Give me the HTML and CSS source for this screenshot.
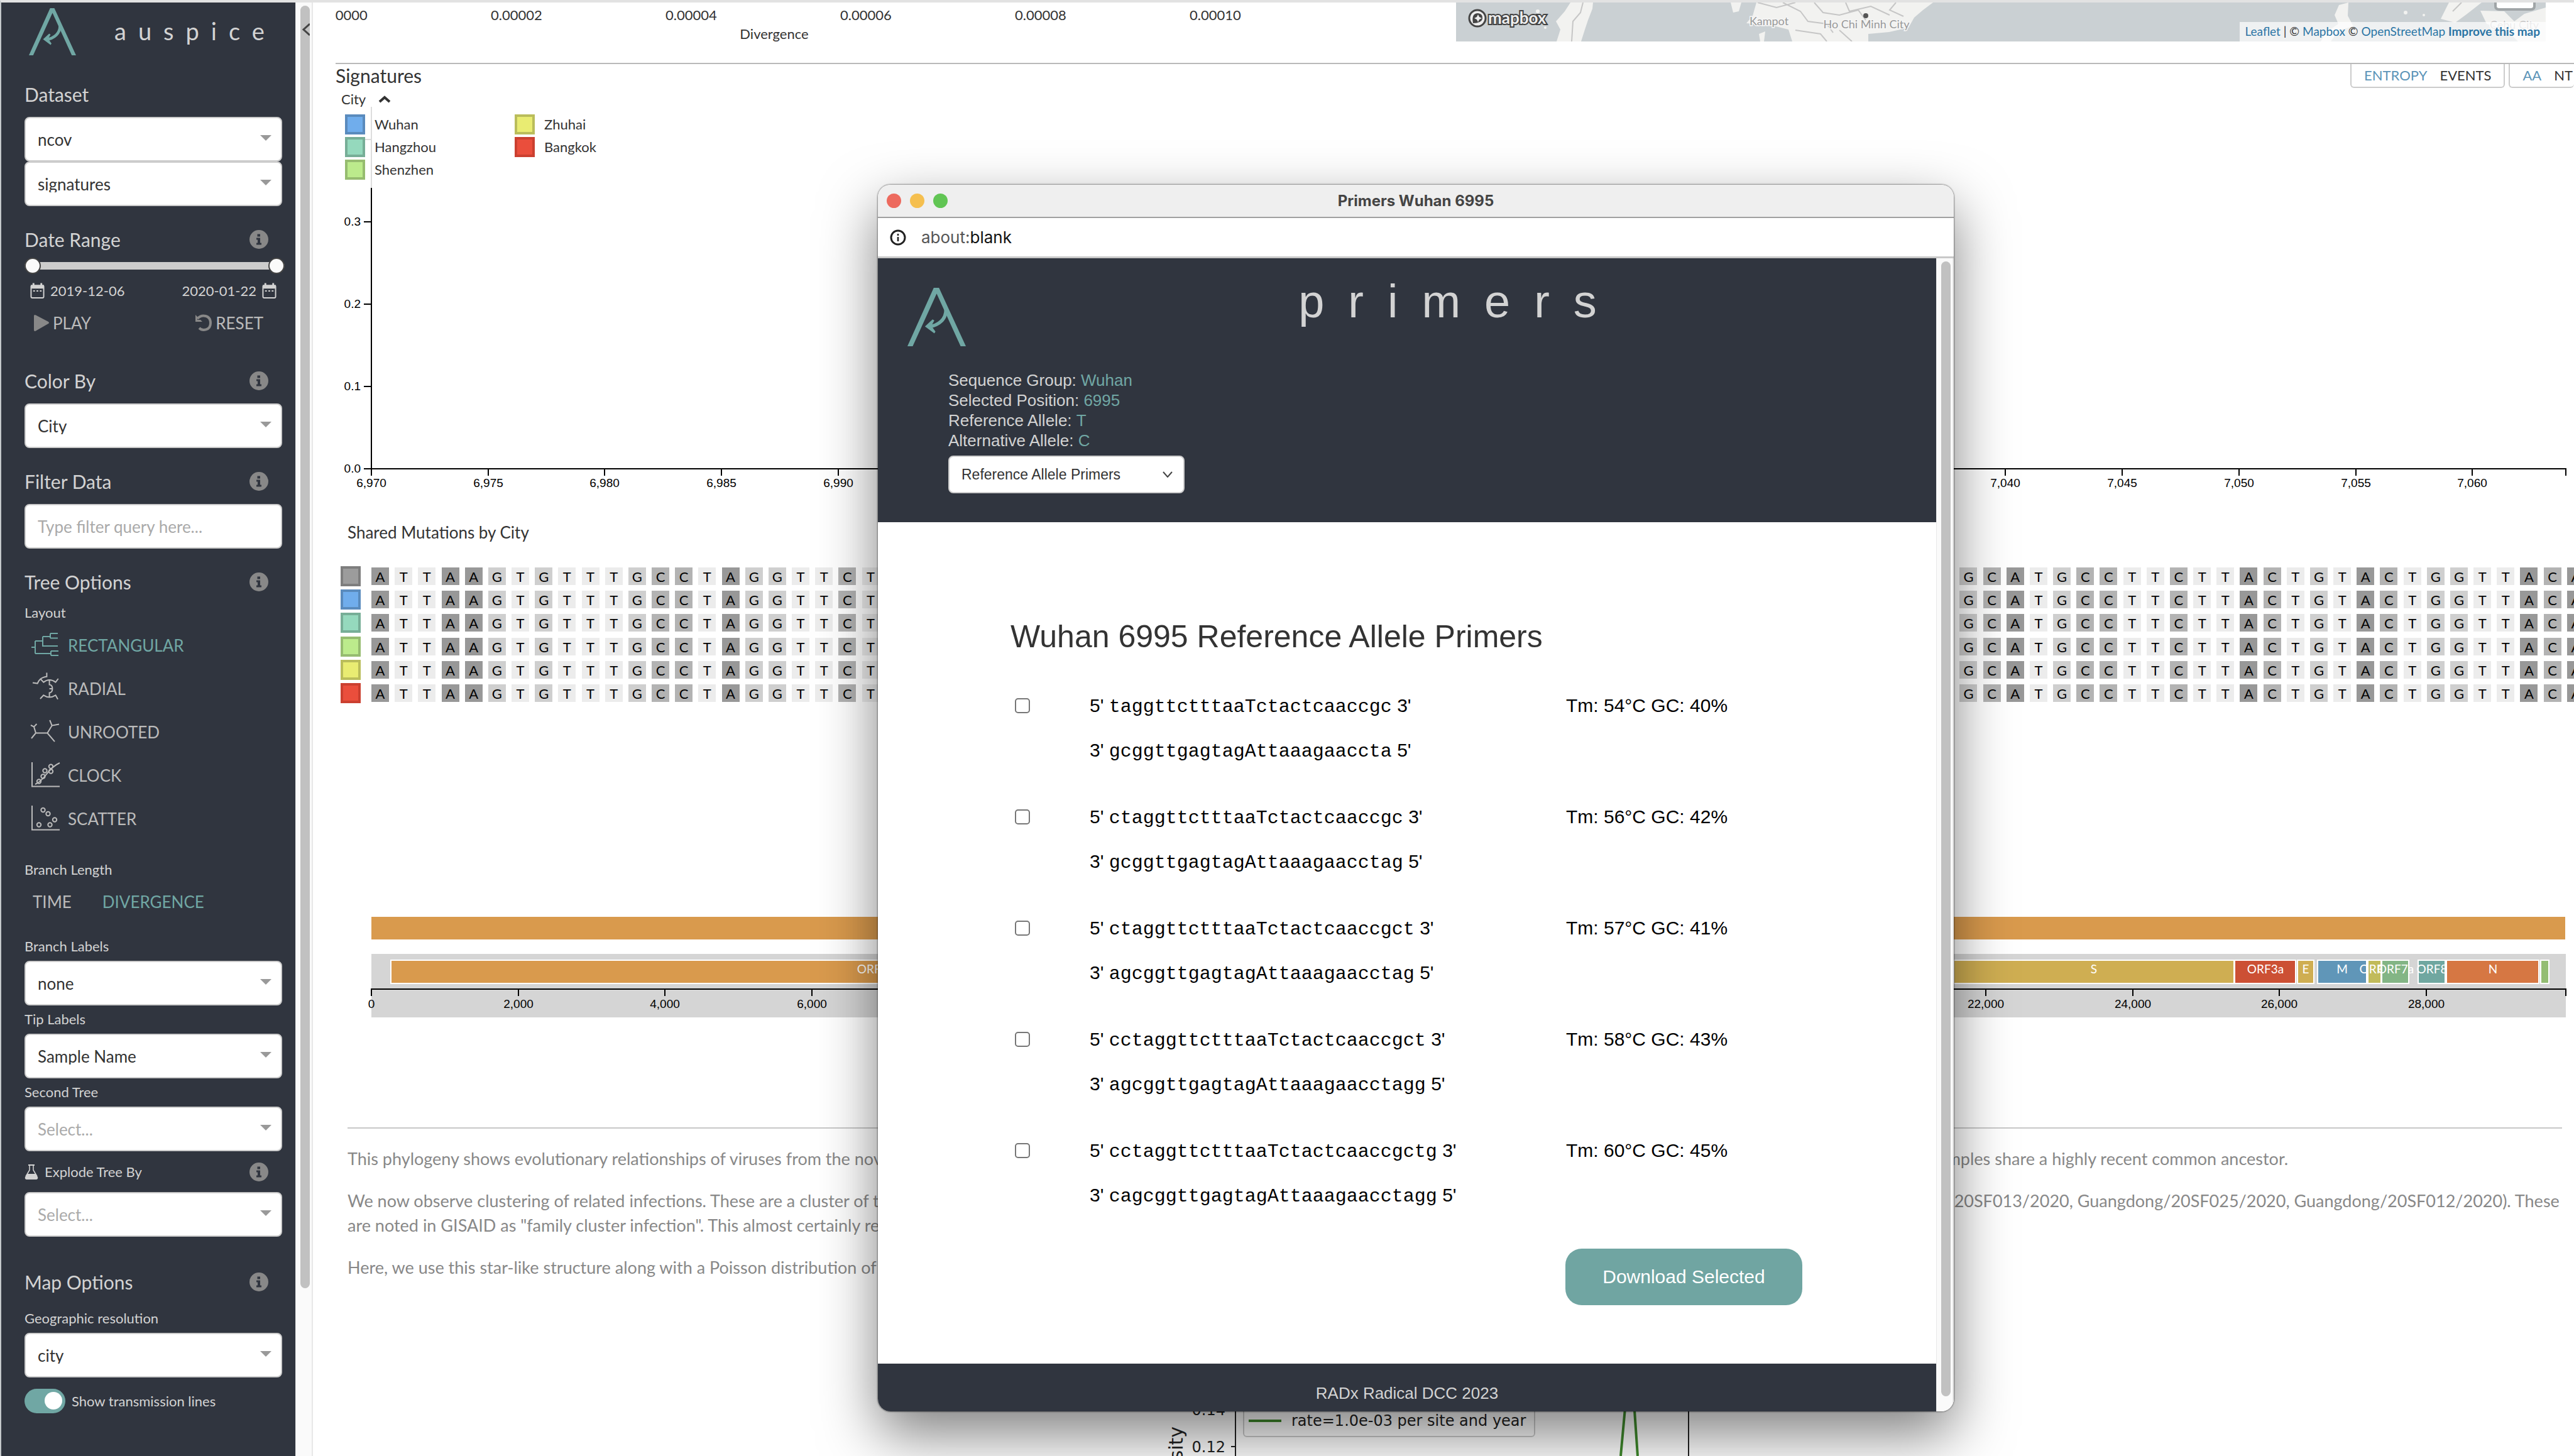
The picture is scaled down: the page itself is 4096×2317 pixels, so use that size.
FILE: index.html
```html
<!DOCTYPE html>
<html lang="en">
<head>
<meta charset="utf-8">
<title>auspice</title>
<link rel="stylesheet" href="styles.css">
</head>
<body>
<svg class="defs" aria-hidden="true">
  <symbol id="logo" viewBox="0 0 100 100">
    <path fill="currentColor" d="M45 0H54L100 100H91L50 10L9 100H0Z"/>
    <path fill="none" stroke="currentColor" stroke-width="6" d="M66 37C66 53 55 64 36 67"/>
    <path fill="currentColor" d="M30 66L43 54L46 56L41 65L48 75L46 78Z"/>
  </symbol>
  <symbol id="info" viewBox="0 0 30 30">
    <circle cx="15" cy="15" r="15" fill="#888"/>
    <path fill="#30353f" d="M12.5 6.5h4.500v4h-4.500zM11 12.500h6v8h2v3h-8v-3h2v-5h-2z"/>
  </symbol>
  <symbol id="calendar" viewBox="0 0 24 26">
    <rect x="1.500" y="4" width="21" height="20.500" rx="2" fill="none" stroke="#d3d3d3" stroke-width="2"/>
    <path fill="#d3d3d3" d="M1 3h22v6H1zM4 0h3v4H4zM17 0h3v4h-3zM5 12h3v2H5zM10.500 12h3v2h-3zM16 12h3v2h-3z"/>
  </symbol>
</svg>

<div class="app">
  <form class="sidebar">
    <header class="brand">
      <svg class="brand-logo"><use href="#logo"/></svg>
      <span class="brand-name">auspice</span>
    </header>

    <h2 class="heading">Dataset</h2>
    <div class="select"><select aria-label="Dataset"><option>ncov</option></select></div>
    <div class="select"><select aria-label="Dataset part"><option>signatures</option></select></div>

    <h2 class="heading heading-tight">Date Range <svg class="info"><use href="#info"/></svg></h2>
    <div class="slider">
      <input type="range" min="0" max="100" value="0" aria-label="Start date">
      <input type="range" min="0" max="100" value="100" aria-label="End date">
    </div>
    <div class="dates">
      <span><svg class="calendar"><use href="#calendar"/></svg>2019-12-06</span>
      <span>2020-01-22<svg class="calendar"><use href="#calendar"/></svg></span>
    </div>
    <div class="player">
      <button type="button"><svg viewBox="0 0 26 28" width="26" height="28"><path fill="#888" d="M1 3Q1 0 4 1.500L24 12Q26 14 24 15L4 26.500Q1 28 1 25Z"/></svg>PLAY</button>
      <button type="button"><svg viewBox="0 0 28 28" width="28" height="28"><path fill="none" stroke="#888" stroke-width="4" d="M4 7C12 -1 25 2 25 14C25 26 12 27 7 22"/><path fill="#888" d="M1 1L1 12H12L9 9L4 9L4 4Z"/></svg>RESET</button>
    </div>

    <h2 class="heading heading-far">Color By <svg class="info"><use href="#info"/></svg></h2>
    <div class="select"><select aria-label="Color By"><option>City</option></select></div>

    <h2 class="heading">Filter Data <svg class="info"><use href="#info"/></svg></h2>
    <input class="field" type="text" placeholder="Type filter query here..." aria-label="Filter Data">

    <h2 class="heading">Tree Options <svg class="info"><use href="#info"/></svg></h2>
    <h3 class="label">Layout</h3>
    <div class="layouts">
      <button type="button" class="layout active"><svg viewBox="0 0 50 48"><path d="M4 27H10M10 17V37M10 17H22M22 10V25H46M22 10H34M34 5V12.500M34 5H46M34 12.500H46M10 37H35M35 33V40M35 33H47M35 40H47"/></svg>RECTANGULAR</button>
      <button type="button" class="layout"><svg viewBox="0 0 50 48"><path d="M6 14.600L13.600 15.600C16 10 19 6 28.400 4.700V-1.500M18 8L23.300 13.600Q32.600 6.500 42.500 13.600L46.700 8M32.600 10V17.500Q37.400 18 37.400 24T32.600 30.400V38M32.600 24H38M18 40L23.300 34.300Q32.600 40.500 42.500 34.300L46 40.700"/></svg>RADIAL</button>
      <button type="button" class="layout"><svg viewBox="0 0 50 48"><path d="M3 13L8 15.600L12.400 11M8 15.600L11 25.500L4 34M11 25.500H29.400L41 39.200M29.400 25.500L36.700 13.600L48 11.600M36.700 13.600L33.200 5"/></svg>UNROOTED</button>
      <button type="button" class="layout"><svg viewBox="0 0 50 48"><path d="M5 3V41.500H49M10 38Q18 35 28 22T49 4"/><circle cx="16" cy="33.500" r="3.200"/><circle cx="22.500" cy="25.500" r="3.200"/><circle cx="25.500" cy="16.500" r="3.200"/><circle cx="35" cy="9.700" r="3.200"/><circle cx="35" cy="17.500" r="3.200"/></svg>CLOCK</button>
      <button type="button" class="layout"><svg viewBox="0 0 50 48"><path d="M5 3V41.500H49"/><circle cx="22.500" cy="10" r="3.200"/><circle cx="30.500" cy="16" r="3.200"/><circle cx="41" cy="25.500" r="3.200"/><circle cx="16" cy="33.500" r="3.200"/><circle cx="33.500" cy="33.500" r="3.200"/></svg>SCATTER</button>
    </div>
    <h3 class="label label-branch">Branch Length</h3>
    <div class="lengths">
      <button type="button">TIME</button>
      <button type="button" class="active">DIVERGENCE</button>
    </div>
    <label class="label label-first" for="branch-labels">Branch Labels</label>
    <div class="select select-close"><select id="branch-labels"><option>none</option></select></div>
    <label class="label label-next" for="tip-labels">Tip Labels</label>
    <div class="select select-close"><select id="tip-labels"><option>Sample Name</option></select></div>
    <label class="label label-next" for="second-tree">Second Tree</label>
    <div class="select select-close empty"><select id="second-tree"><option>Select...</option></select></div>
    <label class="label label-explode" for="explode">
      <svg viewBox="0 0 22 24" width="22" height="24"><path fill="#d3d3d3" d="M6 0H16V2H6ZM1 20L4.500 15H17.500L21 20Q22 23 19 24H3Q0 23 1 20Z"/><path fill="none" stroke="#d3d3d3" stroke-width="1.500" d="M8 1V9L2 19M14 1V9L20 19"/></svg>
      Explode Tree By <svg class="info"><use href="#info"/></svg></label>
    <div class="select empty"><select id="explode"><option>Select...</option></select></div>

    <h2 class="heading heading-far">Map Options <svg class="info"><use href="#info"/></svg></h2>
    <label class="label label-geo" for="geo">Geographic resolution</label>
    <div class="select select-close"><select id="geo"><option>city</option></select></div>
    <label class="toggle"><input type="checkbox" checked>Show transmission lines</label>
  </form>

  <div class="scrollbar side-scroll"><div class="thumb"></div>
    <svg class="collapse" viewBox="0 0 12 20"><path d="M12 1L2 10L12 19" fill="none" stroke="#444" stroke-width="3"/></svg>
  </div>

  <main class="content">
    <div class="panels">
      <svg class="tree-axis" viewBox="0 0 1783 96">
        <g text-anchor="middle">
          <text x="10" y="28">0.00000</text><text x="288" y="28">0.00002</text><text x="566" y="28">0.00004</text>
          <text x="844" y="28">0.00006</text><text x="1122" y="28">0.00008</text><text x="1400" y="28">0.00010</text>
          <text x="698" y="58">Divergence</text>
        </g>
      </svg>
      <div class="map">
        <svg viewBox="0 0 1734 62">
          <g fill="#f2f2f0">
            <path d="M182 0H218L217 10L210 28L205 43L199 62H160L166 43L159 30L173 14Z"/>
            <path d="M437 0H454L450 14L441 16ZM492 46L490 62H484L482 50Z"/>
            <path d="M478 0H759L743 12L729 24L720 40L689 47L656 50L656 62H535L529 43L505 37L462 33L472 21Z"/>
            <path d="M1405 4L1420 0L1419 21L1428 38L1404 44L1392 62H1376L1384 48L1404 34L1398 20Z"/>
            <path d="M1580 0H1632L1609 18L1590 32L1567 26Z"/>
            <path d="M1630 13L1668 14L1684 30L1700 18L1734 8V62H1690L1672 44L1640 34Z"/>
            <circle cx="130" cy="14" r="3"/><circle cx="142" cy="40" r="2"/><circle cx="1511" cy="16" r="3"/><circle cx="1540" cy="20" r="2"/>
          </g>
          <g fill="none" stroke="#c6c6c6" stroke-width="2">
            <path d="M202 0L198 16L186 30L184 62M480 0L510 8L540 0M520 0L548 14L560 30L590 34L600 48M570 0L584 16L610 20L640 12L652 28M620 0L626 14L660 6L690 20M540 44L580 50L590 62M610 44L630 62M700 0L690 12L712 22M1600 0L1586 14"/>
          </g>
          <circle cx="652" cy="21" r="4" fill="#555"/>
          <g class="places" text-anchor="middle"><text x="498" y="36">Kampot</text><text x="653" y="41">Ho Chi Minh City</text><text class="faint" x="1684" y="42">Cebu City</text></g>
          <circle cx="34" cy="25" r="13" fill="#eee" stroke="#444" stroke-width="3"/>
          <path fill="#444" d="M27 33Q24 17 35 17Q43 18 42 26Q40 33 27 33Z"/>
          <path fill="#eee" d="M35 19L37 23L41 25L37 27L35 31L33 27L29 25L33 23Z"/>
          <text class="mapbox" x="51" y="34">mapbox</text>
          <path d="M1654 -4V6Q1654 11 1660 11H1710Q1716 11 1716 6V-4Z" fill="#fff" stroke="#a0a5a7" stroke-width="4"/>
        </svg>
        <p class="credit"><a href="#">Leaflet</a> | © <a href="#">Mapbox</a> © <a href="#">OpenStreetMap</a> <a href="#"><b>Improve this map</b></a></p>
      </div>
    </div>

    <section class="signatures">
      <div class="sig-head">
        <h2>Signatures</h2>
        <div class="switches">
          <div class="switch"><button type="button" class="on">ENTROPY</button><button type="button">EVENTS</button></div>
          <div class="switch cut"><button type="button" class="on">AA</button><button type="button">NT</button></div>
        </div>
      </div>
      <div class="chart">
        <svg id="chart" viewBox="0 0 3562 693">
          <g fill="#ddd"><rect x="46" y="83" width="11" height="2"/><rect x="56" y="32" width="2" height="129"/></g>
          <rect x="56" y="161" width="2" height="448"/><rect x="45" y="607" width="3505" height="2"/><rect x="3548" y="607" width="2" height="12"/>
        </svg>
        <div class="legend">
          <button type="button" class="legend-title">City <svg viewBox="0 0 20 12" width="20" height="12"><path d="M2 10L10 3L18 10" fill="none" stroke="#333" stroke-width="4"/></svg></button>
          <ul>
            <li><i class="swatch wuhan"></i>Wuhan</li><li><i class="swatch hangzhou"></i>Hangzhou</li><li><i class="swatch shenzhen"></i>Shenzhen</li>
            <li><i class="swatch zhuhai"></i>Zhuhai</li><li><i class="swatch bangkok"></i>Bangkok</li>
          </ul>
        </div>
      </div>
      <h3>Shared Mutations by City</h3>
      <div class="matrix" id="matrix"></div>
      <svg class="genome" id="genome" viewBox="0 0 3562 160">
        <rect x="57" y="0" width="3491" height="36" fill="#d99a4d"/>
        <rect x="57" y="59" width="3492" height="101" fill="#d5d5d5"/>
      </svg>
    </section>

    <article class="notes">
      <p>This phylogeny shows evolutionary relationships of viruses from the novel coronavirus (nCoV) outbreak in Wuhan, China and infections exported to other cities. Although the genetic diversity is low, it's clear that all samples share a highly recent common ancestor.</p>
      <p>We now observe clustering of related infections. These are a cluster of two infections in Zhuhai (Guangdong/20SF028/2020 and Guangdong/20SF040/2020) and a cluster of three infections in Shenzhen (Guangdong/20SF013/2020, Guangdong/20SF025/2020, Guangdong/20SF012/2020). These<br>are noted in GISAID as "family cluster infection". This almost certainly represents human-to-human transmission.</p>
      <p>Here, we use this star-like structure along with a Poisson distribution of mutations through time.</p>
    </article>
    <svg class="density" viewBox="0 0 3562 117">
      <path d="M1432 0V117M2153 0V117M1425 102H1432" fill="none" stroke="#222" stroke-width="2"/>
      <text x="1416" y="52" text-anchor="end">0.14</text><text x="1416" y="111" text-anchor="end">0.12</text>
      <text class="axis-name" transform="translate(1348 184) rotate(-90)">Density</text>
      <path d="M2045 117L2053 30H2066L2072 117" fill="none" stroke="#3f8a2c" stroke-width="4"/>
      <rect x="1445" y="10" width="463" height="76" rx="5" fill="#fff" fill-opacity=".5" stroke="#ccc" stroke-width="2"/>
      <path d="M1453 61H1505" stroke="#3f8a2c" stroke-width="4"/>
      <text x="1521" y="69">rate=1.0e-03 per site and year</text>
    </svg>
  </main>
</div>

<section class="window">
  <header class="titlebar"><i class="light red"></i><i class="light yellow"></i><i class="light green"></i><h1>Primers Wuhan 6995</h1></header>
  <div class="address">
    <svg viewBox="0 0 26 26" width="26" height="26"><circle cx="13" cy="13" r="11" fill="none" stroke="#222" stroke-width="3"/><path fill="#222" d="M11.700 7h2.600v3h-2.600zM11.700 12h2.600v7h-2.600z"/></svg>
    <span>about:<b>blank</b></span>
  </div>
  <div class="viewport">
    <div class="page">
      <header class="page-head">
        <div class="page-title"><svg class="page-logo"><use href="#logo"/></svg><h2>primers</h2></div>
        <dl>
          <div><dt>Sequence Group:</dt> <dd>Wuhan</dd></div>
          <div><dt>Selected Position:</dt> <dd>6995</dd></div>
          <div><dt>Reference Allele:</dt> <dd>T</dd></div>
          <div><dt>Alternative Allele:</dt> <dd>C</dd></div>
        </dl>
        <div class="picker"><select aria-label="Primer set"><option>Reference Allele Primers</option></select><svg viewBox="0 0 16 10" width="16" height="10"><path d="M1 1L8 9L15 1" fill="none" stroke="#444" stroke-width="2"/></svg></div>
      </header>
      <div class="page-body">
        <h3>Wuhan 6995 Reference Allele Primers</h3>
        <ul class="primers">
          <li><input type="checkbox" id="p1"><label for="p1"><span>5' <code>taggttctttaaTctactcaaccgc</code> 3'</span><span>3' <code>gcggttgagtagAttaaagaaccta</code> 5'</span></label><span>Tm: 54°C GC: 40%</span></li>
          <li><input type="checkbox" id="p2"><label for="p2"><span>5' <code>ctaggttctttaaTctactcaaccgc</code> 3'</span><span>3' <code>gcggttgagtagAttaaagaacctag</code> 5'</span></label><span>Tm: 56°C GC: 42%</span></li>
          <li><input type="checkbox" id="p3"><label for="p3"><span>5' <code>ctaggttctttaaTctactcaaccgct</code> 3'</span><span>3' <code>agcggttgagtagAttaaagaacctag</code> 5'</span></label><span>Tm: 57°C GC: 41%</span></li>
          <li><input type="checkbox" id="p4"><label for="p4"><span>5' <code>cctaggttctttaaTctactcaaccgct</code> 3'</span><span>3' <code>agcggttgagtagAttaaagaacctagg</code> 5'</span></label><span>Tm: 58°C GC: 43%</span></li>
          <li><input type="checkbox" id="p5"><label for="p5"><span>5' <code>cctaggttctttaaTctactcaaccgctg</code> 3'</span><span>3' <code>cagcggttgagtagAttaaagaacctagg</code> 5'</span></label><span>Tm: 60°C GC: 45%</span></li>
        </ul>
        <button type="button" class="download">Download Selected</button>
      </div>
      <footer>RADx Radical DCC 2023</footer>
    </div>
    <div class="scrollbar"><div class="thumb"></div></div>
  </div>
</section>
<script src="charts.js"></script>
</body>
</html>
```
FILE: charts.js
```js
const NS = "http://www.w3.org/2000/svg";
const X0 = 57;
const WIDTH = 3492;

function add(parent, name, attrs, text) {
  const el = document.createElementNS(NS, name);
  for (const key in attrs) el.setAttribute(key, attrs[key]);
  if (text) el.textContent = text;
  parent.appendChild(el);
}

// Entropy axes
const chart = document.getElementById("chart");
["0.0", "0.1", "0.2", "0.3"].forEach((label, i) => {
  const y = 608 - i * 131;
  add(chart, "rect", { x: 45, y: y - 1, width: 12, height: 2 });
  add(chart, "text", { class: "tick", x: 40, y: y + 6, "text-anchor": "end" }, label);
});
for (let pos = 6970; pos <= 7060; pos += 5) {
  const x = Math.round(X0 + (pos - 6970) * WIDTH / 94);
  add(chart, "rect", { x: x - 1, y: 608, width: 2, height: 11 });
  add(chart, "text", { class: "tick", x, y: 637, "text-anchor": "middle" }, pos.toLocaleString("en-US"));
}

// Genome map
const genome = document.getElementById("genome");
const scale = pos => Math.round(X0 + pos * WIDTH / 29903);
const genes = [
  ["ORF1a", 266, 13468, "#d99a4d"], ["ORF1b", 13468, 21555, "#d67743"],
  ["S", 21563, 25384, "#cfae52"], ["ORF3a", 25393, 26220, "#cc5034"],
  ["E", 26245, 26472, "#cfae52"], ["M", 26523, 27191, "#6096b8"],
  ["ORF6", 27202, 27387, "#c1bb5b"], ["ORF7a", 27394, 27759, "#83b585"],
  ["ORF8", 27894, 28259, "#70a7a0"], ["N", 28274, 29533, "#d67743"],
  ["", 29558, 29674, "#94bd73"]
];
genes.forEach(([name, from, to, fill]) => {
  const x = scale(from), w = scale(to) - x;
  add(genome, "rect", { x, y: 69, width: w, height: 37, fill, stroke: "#fff", "stroke-width": 2 });
  if (name) add(genome, "text", { class: "gene", x: x + Math.round(w / 2), y: 90, "text-anchor": "middle" }, name);
});
add(genome, "rect", { x: 56, y: 114, width: 3494, height: 2 });
add(genome, "rect", { x: 3548, y: 114, width: 2, height: 12 });
for (let pos = 0; pos <= 28000; pos += 2000) {
  const x = scale(pos);
  add(genome, "rect", { x: x - 1, y: 115, width: 2, height: 11 });
  add(genome, "text", { class: "tick", x, y: 145, "text-anchor": "middle" }, pos.toLocaleString("en-US"));
}

// Base matrix, one row for each city below the reference row
const bases = "ATTAAGTGTTTGCCTAGGTTCTTTAATCTACTCAACCGC" +
  "TGTTACTTAATAGAGGCTCTAAACTTTAC" + "GCATGCCTTCTTACTGTACTGGTTACA";
const matrix = document.getElementById("matrix");
["none", "wuhan", "hangzhou", "shenzhen", "zhuhai", "bangkok"].forEach(city => {
  const row = document.createElement("div");
  row.className = "row";
  row.innerHTML = `<i class="swatch ${city}"></i><div class="bases">` +
    [...bases].map(b => `<span><b class="base-${b}">${b}</b></span>`).join("") + "</div>";
  matrix.appendChild(row);
});
```
FILE: styles.css
```css
* { box-sizing: border-box; }
body { margin: 0; background: #fff; color: #333; font: 22px/26px Lato, sans-serif; position: relative; overflow-x: hidden; }
h1, h2, h3, p, ul, dl, dd { margin: 0; padding: 0; font-weight: 400; list-style: none; }
button, select, input { font: inherit; color: inherit; margin: 0; }
button { border: 0; background: none; padding: 0; }
.defs { position: absolute; width: 0; height: 0; }
.app { display: grid; grid-template-columns: 468px 28px 1fr; min-height: 100vh; border-top: 4px solid #e2e2e2; border-left: 2px solid #c4c8ca; }

/* Sidebar */
.sidebar { background: #30353f; color: #d3d3d3; padding: 0 21px 67px 37px; }
.brand { display: flex; align-items: flex-start; height: 128px; padding: 9px 0 0 7px; }
.brand-logo { width: 75px; height: 75px; color: #70a7a4; margin-right: 61px; }
.brand-name { font-size: 38px; line-height: 46px; letter-spacing: 19px; margin-top: 13px; }
.heading { display: flex; align-items: center; justify-content: space-between; font-size: 30px; line-height: 36px; margin: 35px 0 18px; }
.brand + .heading { margin-top: 0; }
.heading-tight { margin-bottom: 12px; }
.heading-far { margin-top: 54px; }
.info { width: 30px; height: 30px; margin: 0 22px 0 auto; flex: none; }
.select { position: relative; }
.select select, .field { display: block; width: 100%; height: 71px; border: 2px solid #ccc; border-radius: 8px; background: #fff; color: #333; font-size: 26px; padding: 0 19px; appearance: none; }
.select::after { content: ""; position: absolute; right: 17px; top: 29px; border: solid transparent; border-width: 9px 9px 0; border-top-color: #999; pointer-events: none; }
.empty select, .field::placeholder { color: #aaa; }
.slider { position: relative; height: 24px; margin-right: -4px; }
.slider::before { content: ""; position: absolute; inset: 6px 0; background: #ccc; border-radius: 6px; }
.slider input { position: absolute; inset: 0; width: 100%; height: 24px; appearance: none; background: none; pointer-events: none; }
.slider input::-webkit-slider-thumb { appearance: none; width: 26px; height: 26px; border: 2px solid #444; border-radius: 50%; background: #fafafa; pointer-events: auto; }
.dates { display: flex; justify-content: space-between; margin-top: 15px; padding: 0 9px; }
.dates span { display: flex; gap: 9px; align-items: center; }
.calendar { width: 23px; height: 26px; }
.player { display: flex; justify-content: space-between; margin: 22px 0 0; padding: 0 30px 4px 14px; }
.player button { display: flex; align-items: center; gap: 5px; font-size: 26px; line-height: 32px; color: #bbb; }
.label { display: block; font-size: 22px; line-height: 26px; }
.layouts { margin: 4px 0 34px; }
.layout { display: flex; align-items: center; gap: 12px; width: 100%; height: 69px; padding-left: 7px; font-size: 26px; color: #bbb; }
.layout svg { width: 50px; height: 48px; overflow: visible; fill: none; stroke: currentColor; stroke-width: 2; }
.active { color: #70a7a4 !important; }
.lengths { display: flex; gap: 49px; margin: 22px 0 42px; padding-left: 13px; font-size: 26px; line-height: 32px; color: #bbb; }
.select-close { margin-top: 10px; }
.label-next { margin-top: 9px; }
.label-explode { display: flex; align-items: center; margin: 18px 0 17px; }
.label-explode svg:first-child { margin-right: 10px; }
.label-geo { margin-top: 27px; }
.toggle { display: flex; align-items: center; gap: 10px; margin-top: 18px; height: 39px; }
.toggle input { appearance: none; width: 65px; height: 39px; border-radius: 20px; background: #70a7a4; padding: 5px 5px 5px 32px; }
.toggle input::before { content: ""; display: block; width: 28px; height: 28px; border-radius: 50%; background: #fff; }

.scrollbar { position: relative; width: 28px; padding: 5px 0 0 7px; background: #fafafa; border: solid #e8e8e8; border-width: 0 2px 0 1px; }
.scrollbar .thumb { width: 15px; height: 1806px; border-radius: 8px; background: #c1c1c1; }
.side-scroll .thumb { height: 2041px; }
.collapse { position: absolute; left: 10px; top: 33px; width: 12px; height: 20px; }

/* Charts */
.content { padding-left: 36px; overflow: hidden; min-width: 0; }
.content svg { display: block; }
.panels { display: grid; grid-template-columns: 1783fr 1734fr; padding-right: 45px; height: 96px; overflow: hidden; }
.tree-axis { width: 100%; font-size: 22px; fill: #333; }
.map { position: relative; align-self: start; overflow: hidden; background: #cad0d3; }
.map svg { width: 100%; }
.places { font-size: 18px; fill: #999; stroke: #f6f6f6; stroke-width: 3px; paint-order: stroke; }
.faint { fill: #c4c4c4; }
.mapbox { font-size: 26px; font-weight: 700; fill: #eee; stroke: #444; stroke-width: 4px; paint-order: stroke; }
.credit { position: absolute; right: 0; bottom: 0; padding: 2px 9px 3px; background: rgba(255, 255, 255, .7); font-size: 19px; line-height: 26px; }
.credit a { color: #2b75a5; text-decoration: none; }
.signatures { border-top: 2px solid #b9b9b9; }
.sig-head { display: flex; justify-content: space-between; height: 36px; }
.sig-head h2 { font-size: 30px; line-height: 36px; }
.switches { display: flex; gap: 6px; }
.switch { display: flex; align-items: center; gap: 20px; height: 38px; padding: 0 20px; border: 2px solid #ccc; border-top: 0; border-radius: 0 0 6px 6px; }
.switch.cut { padding-right: 2px; border-right: 0; }
.on { color: #5b94b8; }
.chart { position: relative; }
.chart > svg, .genome, .density { width: 100%; }
.tick { font: 19px "Liberation Sans", sans-serif; fill: #000; }
.legend { position: absolute; left: 9px; top: 7px; }
.legend-title { display: flex; align-items: center; gap: 20px; height: 26px; }
.legend ul { display: grid; grid-template-rows: repeat(3, 32px); grid-auto-flow: column; grid-auto-columns: 270px; row-gap: 4px; padding: 11px 0 0 6px; }
.legend li { display: flex; align-items: center; gap: 15px; line-height: 32px; }
.swatch { display: block; width: 32px; height: 32px; border: 4px solid; flex: none; }
.none { background: #9c9c9c; border-color: #7e7e7e; }
.wuhan { background: #70adec; border-color: #5a8bbd; }
.hangzhou { background: #95d9bd; border-color: #77ae97; }
.shenzhen { background: #bceb8c; border-color: #96bc70; }
.zhuhai { background: #e9ec72; border-color: #babd5b; }
.bangkok { background: #ea4e3c; border-color: #cb4030; }
.signatures h3 { font-size: 26px; line-height: 32px; padding-left: 19px; }
.matrix { display: grid; grid-auto-rows: 1fr; height: 224px; margin: 35px 0 337px; }
.row { display: flex; align-items: center; gap: 17px; padding-left: 8px; margin-right: -26px; }
.bases { display: grid; grid-template-columns: repeat(95, 1fr); flex: 1; }
.bases b { display: block; width: 28px; height: 28px; font-weight: 400; line-height: 29px; text-align: center; color: #000; }
.base-A { background: #989898; }
.base-C { background: #b3b3b3; }
.base-G { background: #cfcfcf; }
.base-T { background: #ececec; }
.gene { font-size: 19px; fill: #fff; }
.notes { margin: 175px 19px 0; padding-top: 28px; border-top: 2px solid #c8c8c8; font-size: 27px; font-weight: 300; line-height: 39px; color: #888; }
.notes p { margin: 0 -12px 28px 0; }
.density { margin-top: 164px; font: 24px "DejaVu Sans", sans-serif; fill: #222; }
.axis-name { font-size: 30px; }

/* Primer window */
.window { position: absolute; left: 1397px; top: 294px; width: 1712px; overflow: hidden; border-radius: 20px; background: #fff; box-shadow: 0 0 2px 1px rgba(0, 0, 0, .4), 0 36px 90px rgba(0, 0, 0, .5); font-family: "Liberation Sans", sans-serif; }
.titlebar { display: flex; align-items: center; gap: 14px; height: 53px; padding: 0 14px; background: #efefef; border-bottom: 2px solid #a0a0a0; }
.titlebar h1 { flex: 1; padding-right: 111px; text-align: center; font: 700 24px/30px Inter, sans-serif; color: #444; }
.light { width: 23px; height: 23px; border-radius: 50%; }
.red { background: #ed6a5e; }
.yellow { background: #f5bf4f; }
.green { background: #61c554; }
.address { display: flex; align-items: center; gap: 24px; height: 64px; padding: 0 19px; border-bottom: 3px solid #c8c8c8; font: 26px/32px Inter, sans-serif; color: #555; }
.address b { font-weight: 400; color: #111; }
.viewport { display: grid; grid-template-columns: 1fr 28px; }
.page-head { background: #30353f; color: #d3d3d3; height: 420px; font-size: 26px; line-height: 32px; }
.page-title { display: flex; padding: 47px 0 0 47px; height: 178px; }
.page-logo { width: 93px; height: 93px; color: #70a7a4; }
.page-title h2 { flex: 1; margin: -20px 0 0 27px; text-align: center; font-size: 74px; line-height: 84px; letter-spacing: 38px; }
.page-head dl { padding-left: 112px; }
.page-head dt, .page-head dd { display: inline; }
.page-head dd { color: #70a7a4; }
.picker { position: relative; width: 376px; margin: 8px 0 0 112px; }
.picker select { display: block; width: 100%; height: 60px; padding: 0 19px; border: 2px solid #ccc; border-radius: 8px; background: #fff; color: #333; font-size: 23px; appearance: none; }
.picker svg { position: absolute; right: 19px; top: 25px; pointer-events: none; }
.page-body { padding: 153px 211px 93px; }
.page-body h3 { font-size: 50px; line-height: 58px; }
.primers { padding-top: 45px; font-size: 30px; line-height: 71px; color: #000; }
.primers li { display: grid; grid-template-columns: 126px 758px 1fr; align-items: start; height: 177px; }
.primers input { appearance: none; width: 24px; height: 24px; margin: 24px 0 0 7px; border: 2px solid #767676; border-radius: 5px; background: #fff; }
.primers label span { display: block; }
.primers code { font: 30px/30px "Liberation Mono", monospace; }
.download { display: block; width: 377px; height: 90px; margin: 15px 0 0 883px; border-radius: 26px; background: #70a5a2; color: #fff; font-size: 30px; }
.page footer { height: 76px; padding-top: 31px; background: #30353f; color: #d3d3d3; text-align: center; font-size: 26px; line-height: 32px; }
```
